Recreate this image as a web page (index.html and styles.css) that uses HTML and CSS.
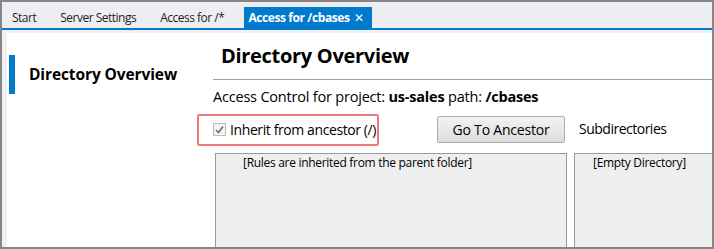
FILE: index.html
```html
<!DOCTYPE html>
<html lang="en">
<head>
<meta charset="UTF-8" />
<title>Access for /cbases</title>
<link rel="stylesheet" href="styles.css">
</head>
<body>

<div class="frame">
  <div class="tabs">
    <div class="tab">Start</div>
    <div class="tab">Server Settings</div>
    <div class="tab">Access for /*</div>
    <div class="tab active">Access for /cbases <span class="close">&#x2715;</span></div>
  </div>

  <div class="content">
    <div class="page">
      <div class="nav">
        <div class="nav-item">Directory Overview</div>
      </div>

      <div class="main">
        <h1>Directory Overview</h1>
        <div class="info">Access Control for project: <b>us-sales</b> path: <b>/cbases</b></div>

        <div class="grid">
          <div class="toolbar">
            <label class="inherit">
              <span class="check">
                <svg width="9" height="9" viewBox="0 0 9 9"><path d="M1 5 L3.5 7.5 L8 1.5" fill="none" stroke="#6d6d6d" stroke-width="1.6"/></svg>
              </span>
              Inherit from ancestor (/)
            </label>
            <button>Go To Ancestor</button>
          </div>
          <div class="sub-title">Subdirectories</div>

          <div class="panel rules">[Rules are inherited from the parent folder]</div>
          <div class="panel dirs">[Empty Directory]</div>
        </div>
      </div>
    </div>
  </div>
</div>

</body>
</html>
```

FILE: styles.css
```css
html, body {
  margin: 0; padding: 0; height: 100%; overflow: hidden;
  font-family: "Open Sans", "Noto Sans", sans-serif;
  color: #000;
}
.frame {
  box-sizing: border-box; height: 249px; width: 714px;
  border: 2px solid #858585; overflow: hidden;
  display: flex; flex-direction: column;
}
.tabs {
  display: flex; align-items: flex-end; gap: 16px;
  height: 26px; padding-left: 6px;
  background: #eeeef2; border-bottom: 2px solid #007acc;
  flex: none;
}
.tab {
  height: 21px; line-height: 21px; padding: 0 4px;
  font-size: 12px; color: #1e1e1e; letter-spacing: -0.5px;
  white-space: nowrap;
}
.tab.active {
  background: #007acc; color: #fff; font-weight: bold;
  padding-right: 8px; letter-spacing: -0.4px;
}
.close {
  font-weight: normal; font-size: 12px; margin-left: 2px;
}
.content {
  flex: 1; background: #f0f0f2;
  padding: 3px 0 0 5px;
  display: flex;
}
.page {
  flex: 1; background: #fff; display: flex;
}
.nav {
  width: 206px; flex: none; padding-top: 22px;
}
.nav-item {
  border-left: 6px solid #007acc; margin-left: 2px;
  height: 39px; line-height: 39px; padding-left: 14px;
  font-size: 15.5px; font-weight: bold; letter-spacing: -0.1px;
}
.main {
  flex: 1;
}
h1 {
  margin: 0; padding: 9px 0 9px 8px;
  font-size: 20px; line-height: 28px; letter-spacing: -0.3px;
  border-bottom: 1px solid #a0a0a0;
}
.info {
  font-size: 14.5px; margin-top: 7px; line-height: 20px; letter-spacing: -0.2px;
}
.grid {
  display: grid; grid-template-columns: 354px 1fr; column-gap: 7px;
  margin-top: 8px;
}
.toolbar {
  display: flex; align-items: center; justify-content: space-between;
  height: 28px; padding-right: 2px;
}
.inherit {
  position: relative; display: flex; align-items: center; gap: 4px;
  font-size: 14px; letter-spacing: -0.4px;
}
.inherit::before {
  content: ""; position: absolute; left: -16px; right: -3px; top: -6px; bottom: -7px;
  border: 2px solid #f17878; border-radius: 2px;
}
.check {
  box-sizing: border-box; width: 13px; height: 13px;
  border: 1px solid #bcbcbc; background: #f4f4f4;
  display: flex; align-items: center; justify-content: center;
}
button {
  box-sizing: border-box; width: 128px; height: 27px;
  font-family: inherit; font-size: 14px; color: #000; letter-spacing: -0.2px;
  background: linear-gradient(#f2f2f2, #dddddd);
  border: 1px solid #adadad; border-radius: 2px; padding: 0;
}
.sub-title {
  font-size: 14px; line-height: 28px; padding-left: 5px; letter-spacing: -0.5px;
}
.panel {
  margin-top: 10px; height: 110px;
  background: #efeff0; border: 1px solid #9a9a9a;
  font-size: 12px; line-height: 18px; letter-spacing: -0.3px;
}
.rules {
  margin-left: 2px; padding-left: 27px;
}
.dirs {
  padding-left: 18px; border-right: none;
}
```
